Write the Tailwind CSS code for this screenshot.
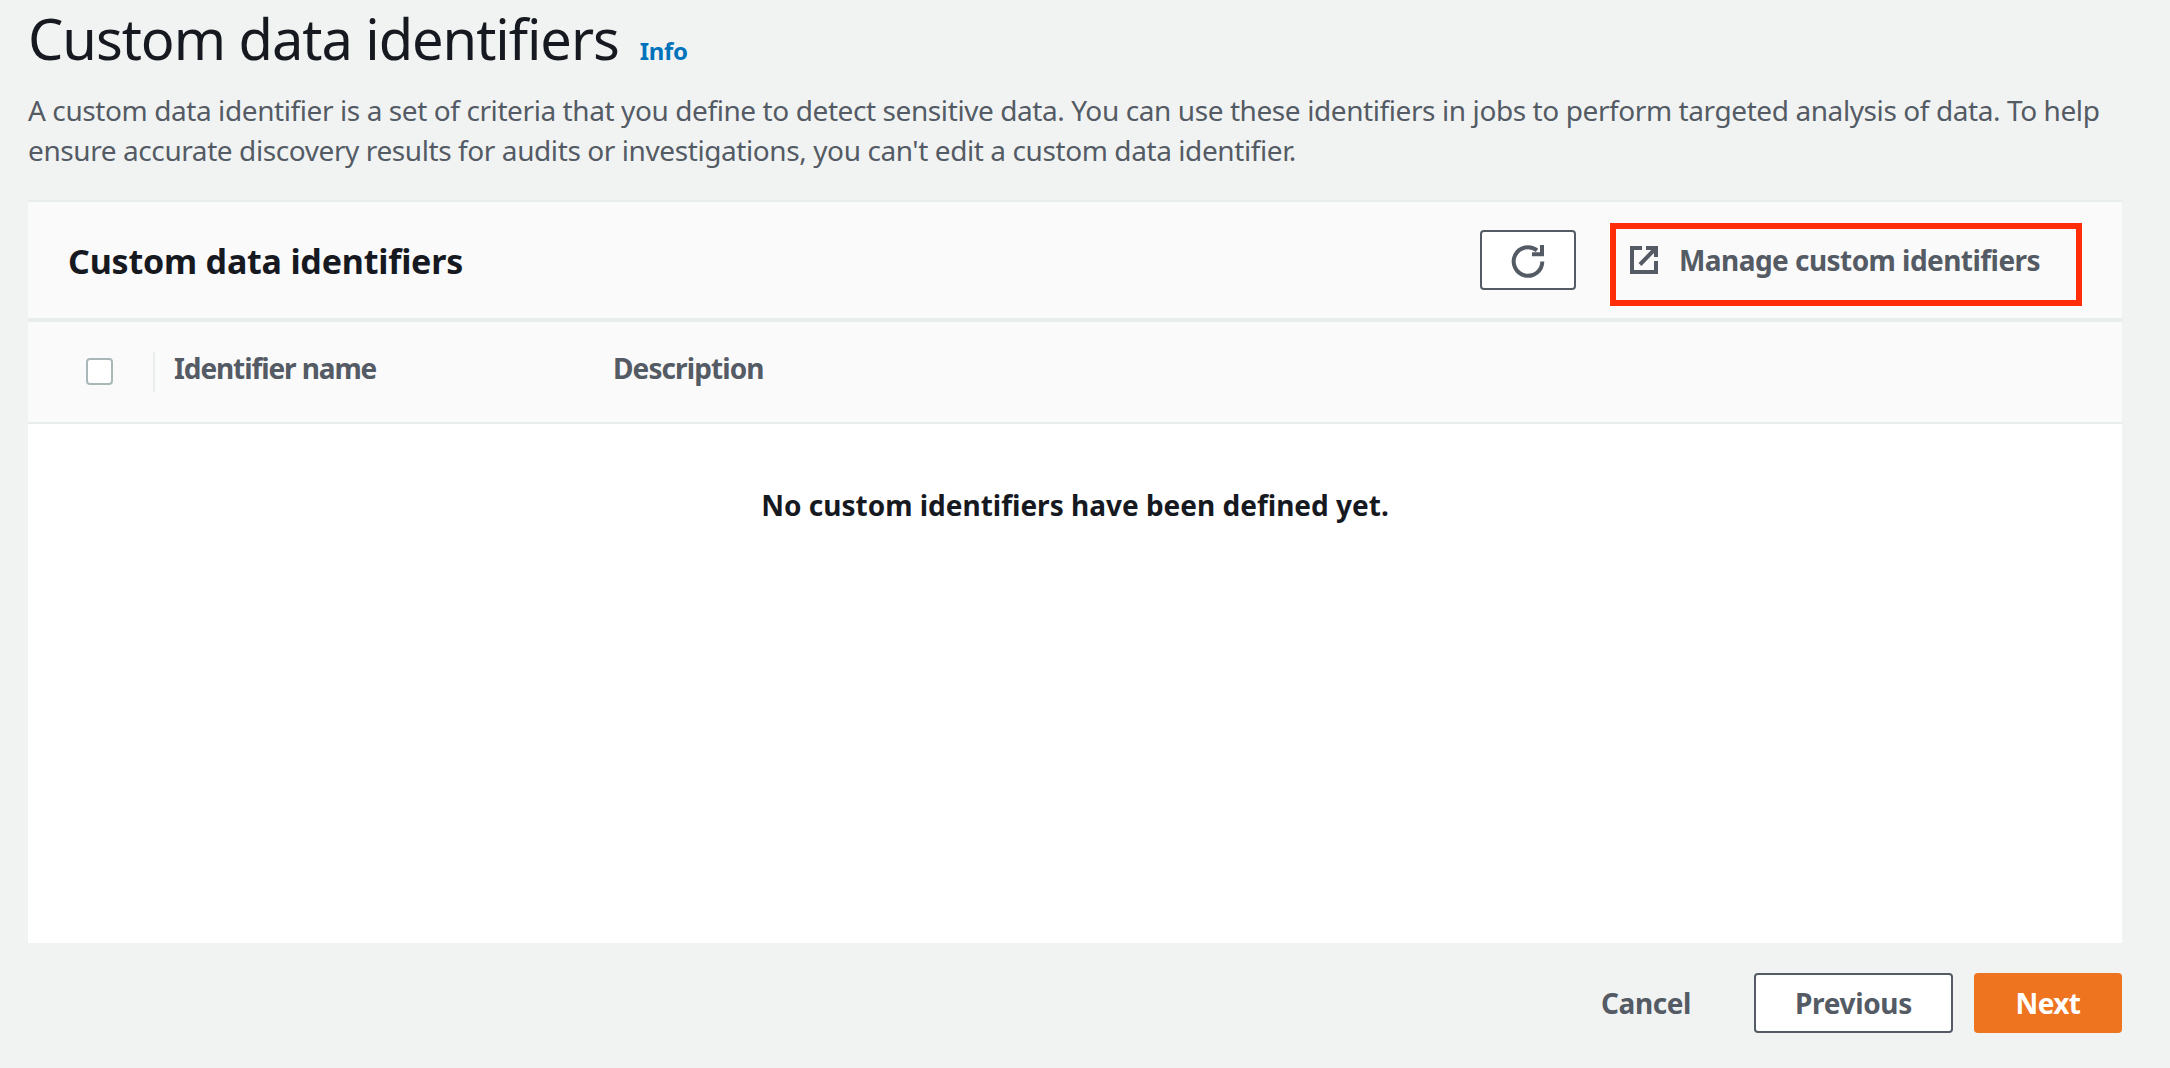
<!doctype html>
<html><head><meta charset="utf-8"><script src="https://cdn.jsdelivr.net/npm/@tailwindcss/browser@4"></script></head>
<body class="w-[2170px] h-[1068px] overflow-hidden bg-[#f1f3f3] font-['Noto_Sans',sans-serif] text-[#16191f]">
<div class="pl-[28px] pr-[48px] pt-[3px]">
  <div class="flex items-end h-[70px] gap-[21px]">
    <h1 class="text-[56px] leading-[70px] font-normal tracking-[-1.05px]">Custom data identifiers</h1>
    <a class="text-[24px] leading-[32px] font-bold text-[#0073bb] mb-[6px] tracking-[-0.35px]">Info</a>
  </div>
  <p class="mt-[17px] text-[28px] leading-[40px] text-[#545b64] tracking-[-0.41px]">A custom data identifier is a set of criteria that you define to detect sensitive data. You can use these identifiers in jobs to perform targeted analysis of data. To help ensure accurate discovery results for audits or investigations, you can't edit a custom data identifier.</p>
  <section class="mt-[30px] bg-white h-[743px] border-t-[2px] border-[#eaeded] flex flex-col">
    <div class="h-[120px] bg-[#fafafa] flex items-start pl-[40px] pr-[40px] border-b-[4px] border-[#eaeded] shrink-0">
      <h2 class="text-[34px] font-bold leading-[44px] mt-[37px] tracking-[-0.2px]">Custom data identifiers</h2>
      <div class="ml-auto flex items-start gap-[34px] mt-[21px]">
        <button class="w-[96px] h-[60px] mt-[7px] bg-white border-2 border-[#545b64] rounded-[4px] flex items-center justify-center">
          <svg width="36" height="36" viewBox="0 0 36 36" fill="none" stroke="#545b64" stroke-width="4"><path d="M32.3 19.5 A14.3 14.3 0 1 1 27 8.4"/><path d="M32 3 V12.2 H22"/></svg>
        </button>
        <div class="w-[472px] h-[83px] border-[6px] border-[#ff2d08] flex items-start pl-[14px] pt-[11px] gap-[21px]">
          <svg width="28" height="28" viewBox="0 0 28 28" fill="none" stroke="#545b64" stroke-width="4" class="shrink-0 mt-[6px]"><path d="M12 2 H2 V26 H26 V15"/><path d="M16 2 H26 V11"/><path d="M25 3 L10 18.5"/></svg>
          <span class="text-[28px] font-bold leading-[40px] text-[#545b64] whitespace-nowrap tracking-[-0.55px]">Manage custom identifiers</span>
        </div>
      </div>
    </div>
    <div class="h-[102px] bg-[#fafafa] border-b-[2px] border-[#eaeded] flex items-start pt-[26px] shrink-0">
      <div class="w-[85px] shrink-0 flex justify-end"><div class="w-[27px] h-[27px] bg-white border-[2px] border-[#aab7b8] rounded-[4px] mt-[10px]"></div></div>
      <div class="w-[2px] h-[40px] bg-[#eaeded] ml-[40px] mt-[4px] shrink-0"></div>
      <div class="ml-[19px] w-[439px] text-[28px] font-bold leading-[40px] text-[#545b64] tracking-[-1.1px]">Identifier name</div>
      <div class="text-[28px] font-bold leading-[40px] text-[#545b64] tracking-[-0.9px]">Description</div>
    </div>
    <div class="pt-[61px] text-center text-[28px] font-bold leading-[40px]">No custom identifiers have been defined yet.</div>
  </section>
  <div class="mt-[30px] flex justify-end items-center">
    <span class="text-[28px] font-bold text-[#545b64] leading-[40px] mr-[63px] tracking-[-0.4px]">Cancel</span>
    <button class="w-[199px] h-[60px] bg-white border-2 border-[#545b64] rounded-[4px] text-[28px] font-bold text-[#545b64] leading-[40px] tracking-[-0.35px]">Previous</button>
    <button class="ml-[21px] w-[148px] h-[60px] bg-[#ef7420] rounded-[4px] text-[28px] font-bold text-white leading-[40px] tracking-[-0.6px]">Next</button>
  </div>
</div>
</body></html>
